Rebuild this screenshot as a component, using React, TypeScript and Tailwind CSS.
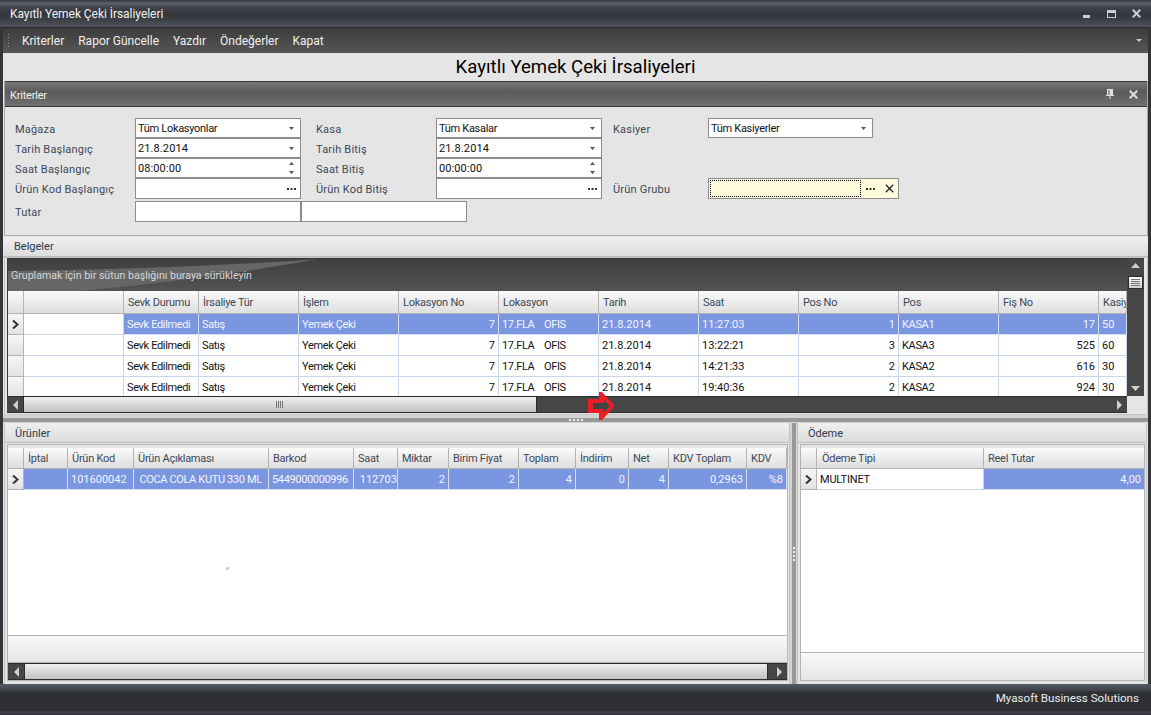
import { ReactNode } from 'react'

const FONT = 'font-["Roboto","Liberation_Sans",Arial,sans-serif]'

const docCols = [
  { w: 100, title: '' },
  { w: 75, title: 'Sevk Durumu' },
  { w: 100, title: 'İrsaliye Tür' },
  { w: 100, title: 'İşlem' },
  { w: 100, title: 'Lokasyon No', right: true },
  { w: 100, title: 'Lokasyon' },
  { w: 100, title: 'Tarih' },
  { w: 100, title: 'Saat' },
  { w: 100, title: 'Pos No', right: true },
  { w: 100, title: 'Pos' },
  { w: 100, title: 'Fiş No', right: true },
  { w: 28, title: 'Kasiy' },
]

const docRows = [
  ['', 'Sevk Edilmedi', 'Satış', 'Yemek Çeki', '7', '17.FLA    OFIS', '21.8.2014', '11:27:03', '1', 'KASA1', '17', '50'],
  ['', 'Sevk Edilmedi', 'Satış', 'Yemek Çeki', '7', '17.FLA    OFIS', '21.8.2014', '13:22:21', '3', 'KASA3', '525', '60'],
  ['', 'Sevk Edilmedi', 'Satış', 'Yemek Çeki', '7', '17.FLA    OFIS', '21.8.2014', '14:21:33', '2', 'KASA2', '616', '30'],
  ['', 'Sevk Edilmedi', 'Satış', 'Yemek Çeki', '7', '17.FLA    OFIS', '21.8.2014', '19:40:36', '2', 'KASA2', '924', '30'],
]

const itemCols = [
  { w: 44, title: 'İptal' },
  { w: 66, title: 'Ürün Kod' },
  { w: 135, title: 'Ürün Açıklaması' },
  { w: 85, title: 'Barkod' },
  { w: 44, title: 'Saat' },
  { w: 51, title: 'Miktar', right: true },
  { w: 70, title: 'Birim Fiyat', right: true },
  { w: 57, title: 'Toplam', right: true },
  { w: 53, title: 'İndirim', right: true },
  { w: 40, title: 'Net', right: true },
  { w: 78, title: 'KDV Toplam', right: true },
  { w: 40, title: 'KDV', right: true },
]

const itemRow = ['', '101600042', ' COCA COLA KUTU 330 ML', '5449000000996', ' 112703', '2', '2', '4', '0', '4', '0,2963', '%8']

type Col = { w: number; title: string; right?: boolean }

// letters run a bit wider than the original face, digits don't
const isTight = (s: string) => /[a-zA-Z]/.test(s) || s.length > 12

function HeaderRow({ cols, short }: { cols: Col[]; short?: boolean }) {
  return (
    <div className={`flex ${short ? 'h-[21px]' : 'h-[23px]'} shrink-0 border-b border-[#b4b4b4]`}>
      <div className="w-4 shrink-0 border-r border-[#b4b4b4] bg-gradient-to-b from-[#fafafa] to-[#dedede]" />
      {cols.map((c, i) => (
        <div
          key={i}
          style={{ width: c.w }}
          className="flex shrink-0 items-center overflow-hidden whitespace-nowrap border-r border-[#b4b4b4] bg-gradient-to-b from-[#fafafa] to-[#dedede] pl-[4px] pt-[2px] tracking-[-0.25px] text-[#3c4858]"
        >
          {c.title}
        </div>
      ))}
    </div>
  )
}

function Indicator({ active }: { active?: boolean }) {
  return (
    <div className="flex w-4 shrink-0 items-center justify-center border-r border-b border-[#b4b4b4] bg-gradient-to-b from-[#f6f6f6] to-[#e2e2e2]">
      {active && (
        <svg width="7" height="9" viewBox="0 0 7 9">
          <path d="M1 0.5 L5.5 4.5 L1 8.5" fill="none" stroke="#333" strokeWidth="2" />
        </svg>
      )}
    </div>
  )
}

function DataRow({
  cols,
  row,
  selected,
  selectFrom = 0,
}: {
  cols: Col[]
  row: string[]
  selected?: boolean
  selectFrom?: number
}) {
  return (
    <div className="flex h-[21px] shrink-0">
      <Indicator active={selected} />
      {cols.map((c, i) => {
        const on = selected && i >= selectFrom
        return (
          <div
            key={i}
            style={{ width: c.w }}
            className={`flex shrink-0 items-center overflow-hidden whitespace-pre border-b border-r px-[3px] pt-[3px] ${
              on ? 'border-[#d6dff2] bg-[#7b96e0] text-[#f2f5fc]' : 'border-[#c9d5ea] bg-white text-[#111]'
            } ${c.right ? 'justify-end' : ''} ${isTight(row[i]) ? 'tracking-[-0.35px]' : ''}`}
          >
            {row[i]}
          </div>
        )
      })}
    </div>
  )
}

function Field({
  w = 'w-[166px]',
  text,
  icon,
}: {
  w?: string
  text?: string
  icon?: 'down' | 'spin' | 'dots'
}) {
  return (
    <div className={`flex h-full ${w} shrink-0 items-center justify-between border border-[#8c8c8c] bg-white pl-[2px] pr-[4px] text-[#111]`}>
      <span className={`pt-[3px] ${text && /[a-zA-Z]/.test(text) ? 'tracking-[-0.3px]' : 'tracking-[0.1px]'}`}>{text}</span>
      {icon === 'down' && (
        <svg width="5" height="3" viewBox="0 0 5 3" className="mr-[2px]">
          <path d="M0 0H5L2.500 3Z" fill="#555" />
        </svg>
      )}
      {icon === 'spin' && (
        <svg width="5" height="12" viewBox="0 0 5 12" className="mr-[2px]">
          <path d="M0 3L2.500 0L5 3ZM0 9H5L2.500 12Z" fill="#555" />
        </svg>
      )}
      {icon === 'dots' && <Dots />}
    </div>
  )
}

function Dots() {
  return (
    <svg width="9" height="2" viewBox="0 0 9 2">
      <path d="M0 0h2v2H0zM3.500 0h2v2h-2zM7 0h2v2H7z" fill="#333" />
    </svg>
  )
}

function Label({ w, children }: { w: string; children?: ReactNode }) {
  return <div className={`${w} shrink-0 pt-[4px] tracking-[0.2px] text-[#3c4858]`}>{children}</div>
}

function XIcon({ color, stroke = 2 }: { color: string; stroke?: number }) {
  return (
    <svg width="9" height="9" viewBox="0 0 9 9">
      <path d="M0.8 0.8L8.2 8.2M8.2 0.8L0.8 8.2" stroke={color} strokeWidth={stroke} fill="none" />
    </svg>
  )
}

function ScrollArrow({ dir }: { dir: 'l' | 'r' | 'u' | 'd' }) {
  const d = { l: 'M5 0V10L0 5Z', r: 'M0 0V10L5 5Z', u: 'M0 5H9L4.5 0Z', d: 'M0 0H9L4.5 5Z' }[dir]
  const horizontal = dir === 'l' || dir === 'r'
  return (
    <svg width={horizontal ? 5 : 9} height={horizontal ? 10 : 5} viewBox={horizontal ? '0 0 5 10' : '0 0 9 5'}>
      <path d={d} fill="#cfcfcf" />
    </svg>
  )
}

function HScroll({ thumb, showGrip = true }: { thumb: number; showGrip?: boolean }) {
  return (
    <div className="flex h-[17px] shrink-0 border-y border-[#2c2c2e] bg-[#464646]">
      <div className="flex w-[17px] shrink-0 items-center justify-center border-r border-[#2c2c2e]">
        <ScrollArrow dir="l" />
      </div>
      <div
        style={{ width: thumb }}
        className="flex shrink-0 items-center justify-center border-r border-[#2c2c2e] bg-gradient-to-b from-[#f0f0f0] to-[#c2c2c2]"
      >
        {showGrip && (
          <svg width="7" height="7" viewBox="0 0 7 7" className="mr-[2px]">
            <path d="M0.5 0V7M2.5 0V7M4.5 0V7M6.5 0V7" stroke="#777" />
          </svg>
        )}
      </div>
      <div className="flex flex-1 items-center justify-end pr-[5px]">
        <ScrollArrow dir="r" />
      </div>
    </div>
  )
}

function GroupTab({ title }: { title: string }) {
  return (
    <div className="flex h-[20px] shrink-0 items-center border-b border-[#bdbdbd] bg-gradient-to-b from-[#efefef] to-[#dcdcdc] pl-[10px] pt-[4px] text-[#2e3a48]">
      {title}
    </div>
  )
}

export default function App() {
  return (
    <div className={`relative flex h-[715px] w-[1151px] flex-col overflow-hidden bg-[#33353a] text-[11px] ${FONT}`}>
      {/* title bar */}
      <div className="flex h-[27px] shrink-0 items-center justify-between bg-[linear-gradient(#33353a_0,#5d6269_3px,#3f4248_8px,#33363b_14px,#3d4046_20px,#4d5159_26px)] pl-[10px] pr-[10px]">
        <span className="pt-[1px] text-[12px] tracking-[-0.05px] text-[#f2f2f2]">Kayıtlı Yemek Çeki İrsaliyeleri</span>
        <div className="flex items-center">
          <svg width="7" height="3" viewBox="0 0 7 3" className="mr-[17px] mt-[6px]">
            <rect width="7" height="3" fill="#c9ced4" />
          </svg>
          <svg width="9" height="8" viewBox="0 0 9 8" className="mr-[16px]">
            <path d="M0 0H9V8H0Z M1 3V7H8V3Z" fillRule="evenodd" fill="#c9ced4" />
          </svg>
          <XIcon color="#c9ced4" />
        </div>
      </div>

      {/* menu bar */}
      <div className="mx-[3px] flex h-[26px] shrink-0 items-center border-t border-[#26282b] bg-gradient-to-b from-[#3c3c3c] to-[#565656] text-[12px] text-[#f0f0f0]">
        <div className="ml-[4px] mr-[12px] h-[16px] w-[3px] bg-[radial-gradient(#8a8a8a_1px,transparent_1px)] bg-[length:3px_3px]" />
        <span className="mr-[14px]">Kriterler</span>
        <span className="mr-[14px]">Rapor Güncelle</span>
        <span className="mr-[14px]">Yazdır</span>
        <span className="mr-[14px]">Öndeğerler</span>
        <span>Kapat</span>
        <svg width="6" height="3" viewBox="0 0 6 3" className="ml-auto mr-[6px]">
          <path d="M0 0H6L3 3Z" fill="#c8c8c8" />
        </svg>
      </div>

      {/* content */}
      <div className="mx-[3px] flex min-h-0 flex-1 flex-col bg-[#e5e5e5]">
        <div className="flex h-[28px] shrink-0 items-center justify-center text-[18.6px] leading-none text-black">
          Kayıtlı Yemek Çeki İrsaliyeleri
        </div>

        {/* Kriterler */}
        <div className="ml-[1px] flex h-[155px] shrink-0 flex-col border-x border-b border-[#a9a9a9]">
          <div className="flex h-[26px] shrink-0 items-center justify-between border-y border-[#3a3a3a] bg-[linear-gradient(#777_0,#5b5b5b_40%,#6f6f6f_100%)] pl-[5px] pr-[9px] text-[#f0f0f0]">
            <span className="pt-[4px] tracking-[-0.2px]">Kriterler</span>
            <div className="flex items-center gap-[15px]">
              <svg width="8" height="10" viewBox="0 0 8 10">
                <path d="M1 0H7V6H8V7H4.500V10H3.500V7H0V6H1Z M2.500 1V6H3.500V1Z" fillRule="evenodd" fill="#dde0e3" />
              </svg>
              <XIcon color="#dde0e3" />
            </div>
          </div>
          <div className="flex flex-col pl-[10px] pt-[11px]">
            <div className="flex h-[20px] items-center">
              <Label w="w-[120px]">Mağaza</Label>
              <Field text="Tüm Lokasyonlar" icon="down" />
              <div className="w-[15px]" />
              <Label w="w-[120px]">Kasa</Label>
              <Field text="Tüm Kasalar" icon="down" />
              <div className="w-[11px]" />
              <Label w="w-[95px]">Kasiyer</Label>
              <Field text="Tüm Kasiyerler" icon="down" w="w-[165px]" />
            </div>
            <div className="flex h-[20px] items-center">
              <Label w="w-[120px]">Tarih Başlangıç</Label>
              <Field text="21.8.2014" icon="down" />
              <div className="w-[15px]" />
              <Label w="w-[120px]">Tarih Bitiş</Label>
              <Field text="21.8.2014" icon="down" />
            </div>
            <div className="flex h-[20px] items-center">
              <Label w="w-[120px]">Saat Başlangıç</Label>
              <Field text="08:00:00" icon="spin" />
              <div className="w-[15px]" />
              <Label w="w-[120px]">Saat Bitiş</Label>
              <Field text="00:00:00" icon="spin" />
            </div>
            <div className="flex h-[21px] items-center">
              <Label w="w-[120px]">Ürün Kod Başlangıç</Label>
              <Field icon="dots" />
              <div className="w-[15px]" />
              <Label w="w-[120px]">Ürün Kod Bitiş</Label>
              <Field icon="dots" />
              <div className="w-[11px]" />
              <Label w="w-[95px]">Ürün Grubu</Label>
              <div className="flex h-full w-[191px] items-center border border-[#8c8c8c] bg-[#fdfbdc] p-[1px] pr-[4px]">
                <div className="h-full w-[152px] border border-dotted border-black" />
                <div className="ml-[5px]">
                  <Dots />
                </div>
                <div className="ml-[10px] flex">
                  <XIcon color="#222" stroke={1.3} />
                </div>
              </div>
            </div>
            <div className="mt-[2px] flex h-[21px] items-center">
              <Label w="w-[120px]">Tutar</Label>
              <Field />
              <Field />
            </div>
          </div>
        </div>

        {/* Belgeler */}
        <div className="mt-[1px] flex h-[20px] shrink-0 items-center border-b border-[#bdbdbd] bg-gradient-to-b from-[#efefef] to-[#dcdcdc] pl-[11px] pt-[1px] text-[#2e3a48]">
          Belgeler
        </div>
        <div className="ml-[1px] flex h-[158px] shrink-0 border border-[#c4c4c4] pb-[1px] pl-[2px]">
          <div className="flex min-w-0 flex-1 flex-col">
            <div className="flex min-h-0 flex-1">
              <div className="flex w-[1120px] shrink-0 flex-col overflow-hidden border-l border-t border-[#3a3a3a] bg-white">
                <div className="relative flex h-[32px] shrink-0 items-center overflow-hidden bg-gradient-to-b from-[#3f3f3f] to-[#535353] pl-[3px] pt-[2px] text-[10.6px] text-[#d8d8d8]">
                  <svg width="320" height="32" viewBox="0 0 320 32" className="absolute bottom-0 left-0">
                    <path d="M0 12C100 11 220 7 310 0C240 13 140 26 70 32H0Z" fill="#666" />
                  </svg>
                  <span className="relative">Gruplamak için bir sütun başlığını buraya sürükleyin</span>
                </div>
                <HeaderRow cols={docCols} />
                {docRows.map((r, i) => (
                  <DataRow key={i} cols={docCols} row={r} selected={i === 0} selectFrom={1} />
                ))}
              </div>
              <div className="flex w-[17px] shrink-0 flex-col items-center border-t border-[#3a3a3a] bg-[#464646] pb-[5px] pt-[4px]">
                <ScrollArrow dir="u" />
                <div className="mt-[8px] flex h-[13px] w-[15px] items-center justify-center border border-[#2c2c2e] bg-gradient-to-b from-[#fafafa] to-[#d0d0d0]">
                  <svg width="9" height="7" viewBox="0 0 9 7">
                    <path d="M0 .5H9M0 2.500H9M0 4.500H9M0 6.500H9" stroke="#777" />
                  </svg>
                </div>
                <div className="flex-1" />
                <ScrollArrow dir="d" />
              </div>
            </div>
            <div className="flex shrink-0">
              <div className="w-[1120px] shrink-0">
                <HScroll thumb={513} />
              </div>
              <div className="flex-1 bg-[#e5e5e5]" />
            </div>
          </div>
        </div>

        {/* horizontal splitter */}
        <div className="flex h-[8px] shrink-0 items-center justify-center bg-[linear-gradient(#d4d4d4_0,#d4d4d4_3px,#999_3px,#999_7px,#d4d4d4_7px)] pt-[2px]">
          <svg width="14" height="2" viewBox="0 0 14 2">
            <path d="M0 0h2v2H0zM4 0h2v2H4zM8 0h2v2H8zM12 0h2v2h-2z" fill="#f0f0f0" />
          </svg>
        </div>

        {/* bottom panels */}
        <div className="flex min-h-0 flex-1">
          <div className="ml-[1px] flex w-[786px] shrink-0 flex-col border-x border-[#c4c4c4]">
            <GroupTab title="Ürünler" />
            <div className="mb-[3px] ml-[2px] mr-[1px] mt-[1px] flex min-h-0 flex-1 flex-col border border-[#b4b4b4] bg-white">
              <div className="h-[3px] shrink-0 bg-[#e5e5e5]" />
              <HeaderRow cols={itemCols} short />
              <DataRow cols={itemCols} row={itemRow} selected />
              <div className="flex-1 bg-white" />
              <div className="h-[28px] shrink-0 border-y border-[#b4b4b4] bg-gradient-to-b from-[#f8f8f8] to-[#e6e6e6]" />
              <HScroll thumb={743} showGrip={false} />
            </div>
          </div>

          {/* vertical splitter */}
          <div className="flex w-[7px] shrink-0 items-center justify-center border-l-2 border-r border-[#d4d4d4] bg-[#999]">
            <svg width="2" height="14" viewBox="0 0 2 14">
              <path d="M0 0h2v2H0zM0 4h2v2H0zM0 8h2v2H0zM0 12h2v2H0z" fill="#f0f0f0" />
            </svg>
          </div>

          <div className="mr-[1px] flex min-w-0 flex-1 flex-col border-x border-[#c4c4c4]">
            <GroupTab title="Ödeme" />
            <div className="mb-[3px] ml-[2px] mr-[1px] mt-[1px] flex min-h-0 flex-1 flex-col border border-[#b4b4b4] bg-white">
              <div className="h-[3px] shrink-0 bg-[#e5e5e5]" />
              <div className="flex h-[21px] shrink-0 border-b border-[#b4b4b4]">
                <div className="w-4 shrink-0 border-r border-[#b4b4b4] bg-gradient-to-b from-[#fafafa] to-[#dedede]" />
                <div className="flex w-[167px] shrink-0 items-center border-r border-[#b4b4b4] bg-gradient-to-b from-[#fafafa] to-[#dedede] pl-[5px] pt-[2px] tracking-[-0.25px] text-[#3c4858]">
                  Ödeme Tipi
                </div>
                <div className="flex flex-1 items-center bg-gradient-to-b from-[#fafafa] to-[#dedede] pl-[4px] pt-[2px] tracking-[-0.25px] text-[#3c4858]">
                  Reel Tutar
                </div>
              </div>
              <div className="flex h-[21px] shrink-0">
                <Indicator active />
                <div className="flex w-[167px] shrink-0 items-center border-b border-r border-[#c9d5ea] px-[3px] pt-[3px] tracking-[-0.2px] text-[#111]">
                  MULTINET
                </div>
                <div className="flex flex-1 items-center justify-end border-b border-[#d6dff2] bg-[#7b96e0] px-[3px] pt-[3px] text-[#f2f5fc]">
                  4,00
                </div>
              </div>
              <div className="flex-1 bg-white" />
              <div className="h-[28px] shrink-0 border-t border-[#b4b4b4] bg-gradient-to-b from-[#f8f8f8] to-[#e6e6e6]" />
            </div>
          </div>
        </div>
      </div>

      {/* status bar */}
      <div className="flex h-[31px] shrink-0 items-center justify-end bg-[linear-gradient(#565a62_0,#3c3f46_7px,#2e3034_8px,#2e3034_27px,#44474d_28px,#2e3034_31px)] pb-[2px] pr-[12px] text-[11.6px] text-[#ececec]">
        Myasoft Business Solutions
      </div>

      {/* red arrow drawn over the screenshot */}
      <svg width="26" height="28" viewBox="0 0 26 28" className="absolute left-[588px] top-[392px]">
        <path d="M0 7H11V0H14L26 13V15L14 28H11V21H0Z" fill="#ee1c25" />
        <path d="M5 11H16V8L22 14L16 20V17H5Z" fill="#444" />
      </svg>
      {/* stray dot in the item list */}
      <div className="absolute left-[226px] top-[567px] h-[3px] w-[3px] bg-[#c6d2ea]" />
    </div>
  )
}
